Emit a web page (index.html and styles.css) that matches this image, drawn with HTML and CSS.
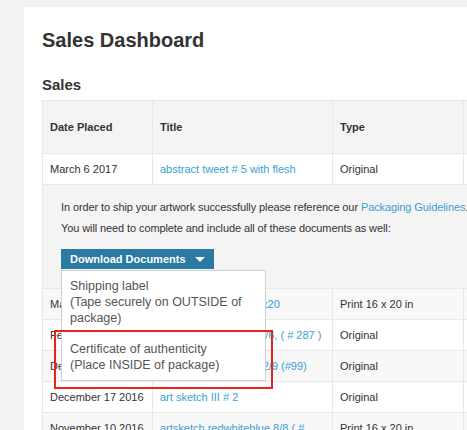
FILE: index.html
```html
<!DOCTYPE html>
<html>
  <head>
    <title>Sales Dashboard</title>
    <link rel="stylesheet" href="styles.css">
  </head>
  <body>
<div id="page">
  <h1>Sales Dashboard</h1>
  <h2>Sales</h2>

  <table id="sales">
    <colgroup>
      <col class="col-date">
      <col class="col-title">
      <col class="col-type">
      <col class="col-more">
    </colgroup>
    <thead>
      <tr>
        <th>Date Placed</th>
        <th>Title</th>
        <th>Type</th>
        <th></th>
      </tr>
    </thead>
    <tbody>
      <tr>
        <td>March 6 2017</td>
        <td><a href="#">abstract tweet # 5 with flesh</a></td>
        <td>Original</td>
        <td></td>
      </tr>
      <tr class="details">
        <td colspan="4">
          <p>In order to ship your artwork successfully please reference our <a href="#">Packaging Guidelines</a>.</p>
          <p>You will need to complete and include all of these documents as well:</p>
          <div class="dropdown">
            <button class="dl-button">Download Documents <span class="caret"></span></button>
            <ul class="dl-menu">
              <li>Shipping label<br>(Tape securely on OUTSIDE of package)</li>
              <li>Certificate of authenticity<br>(Place INSIDE of package)</li>
            </ul>
          </div>
        </td>
      </tr>
      <tr class="stripe">
        <td>March 2 2017</td>
        <td><a href="#">abstract tweet # 4 16x20</a></td>
        <td>Print 16 x 20 in</td>
        <td></td>
      </tr>
      <tr>
        <td>February 20 2017</td>
        <td><a href="#">abstract tweet # 3 1 6/6, ( # 287 )</a></td>
        <td>Original</td>
        <td></td>
      </tr>
      <tr class="stripe">
        <td>December 29 2016</td>
        <td><a href="#">abstract tweet # 2 nr 2/9 (#99)</a></td>
        <td>Original</td>
        <td></td>
      </tr>
      <tr>
        <td>December 17 2016</td>
        <td><a href="#">art sketch III # 2</a></td>
        <td>Original</td>
        <td></td>
      </tr>
      <tr class="stripe">
        <td>November 10 2016</td>
        <td><a href="#">artsketch redwhiteblue 8/8 ( # 136 )</a></td>
        <td>Print 16 x 20 in</td>
        <td></td>
      </tr>
    </tbody>
  </table>

  <div class="highlight"></div>
</div>
  </body>
</html>
```

FILE: styles.css
```css
body { margin: 0;
	background: #f2f2f2;
	color: #333;
	font-family: "Liberation Sans", Arial, Helvetica, sans-serif;
	overflow: hidden;
	}

#page {
	position: relative;
	margin: 7px 0 0 24px;
	padding: 21px 0 0 18px;
	width: 700px;
	min-height: 480px;
	background: #fff;
}

h1 { margin: 0; font-size: 20px; line-height: 24px; font-weight: bold; }
h2 { margin: 24px 0 6px; font-size: 15px; line-height: 18px; font-weight: bold; }

a { color: #3a9fd4; text-decoration: none; }

#sales {
	border-collapse: collapse;
	table-layout: fixed;
	width: 571px;
	font-size: 11px;
	line-height: 15px;
}
.col-date { width: 110px; }
.col-title { width: 180px; }
.col-type { width: 131px; }
.col-more { width: 150px; }

#sales th, #sales td {
	border: 1px solid #e8e8e8;
	text-align: left;
	vertical-align: top;
	padding: 8px 7px 7px;
}
#sales th { background: #f4f4f4; padding: 19px 7px 18px; font-weight: bold; }
#sales tr.stripe td { background: #f8f8f8; }

#sales tr.details td { background: #f4f4f4; padding: 15px 18px 19px; letter-spacing: -0.1px; }
.details p { margin: 0 0 6px; }

.dropdown { position: relative; margin-top: 13px; }
.dl-button {
	display: inline-flex;
	align-items: center;
	gap: 9px;
	height: 20px;
	padding: 0 9px 0 9px;
	border: none;
	border-radius: 0;
	background: #2a7aa3;
	color: #fff;
	font: bold 11px "Liberation Sans", Arial, sans-serif;
	letter-spacing: 0;
}
.caret {
	width: 0; height: 0;
	border-left: 5px solid transparent;
	border-right: 5px solid transparent;
	border-top: 5px solid #fff;
}

.dl-menu {
	position: absolute;
	top: 21px;
	left: 0;
	z-index: 2;
	width: 203px;
	margin: 0;
	padding: 0;
	list-style: none;
	background: #fff;
	border: 1px solid #cfcfcf;
	color: #555;
	font-size: 12.5px;
	line-height: 16px;
	letter-spacing: 0;
}
.dl-menu li { padding: 7px 8px 7px; }
.dl-menu li + li { padding-top: 8px; }

/* annotation box drawn over the menu */
.highlight {
	position: absolute;
	left: 30px;
	top: 323px;
	width: 215px;
	height: 55px;
	border: 2px solid #e8231d;
	z-index: 3;
}
```
